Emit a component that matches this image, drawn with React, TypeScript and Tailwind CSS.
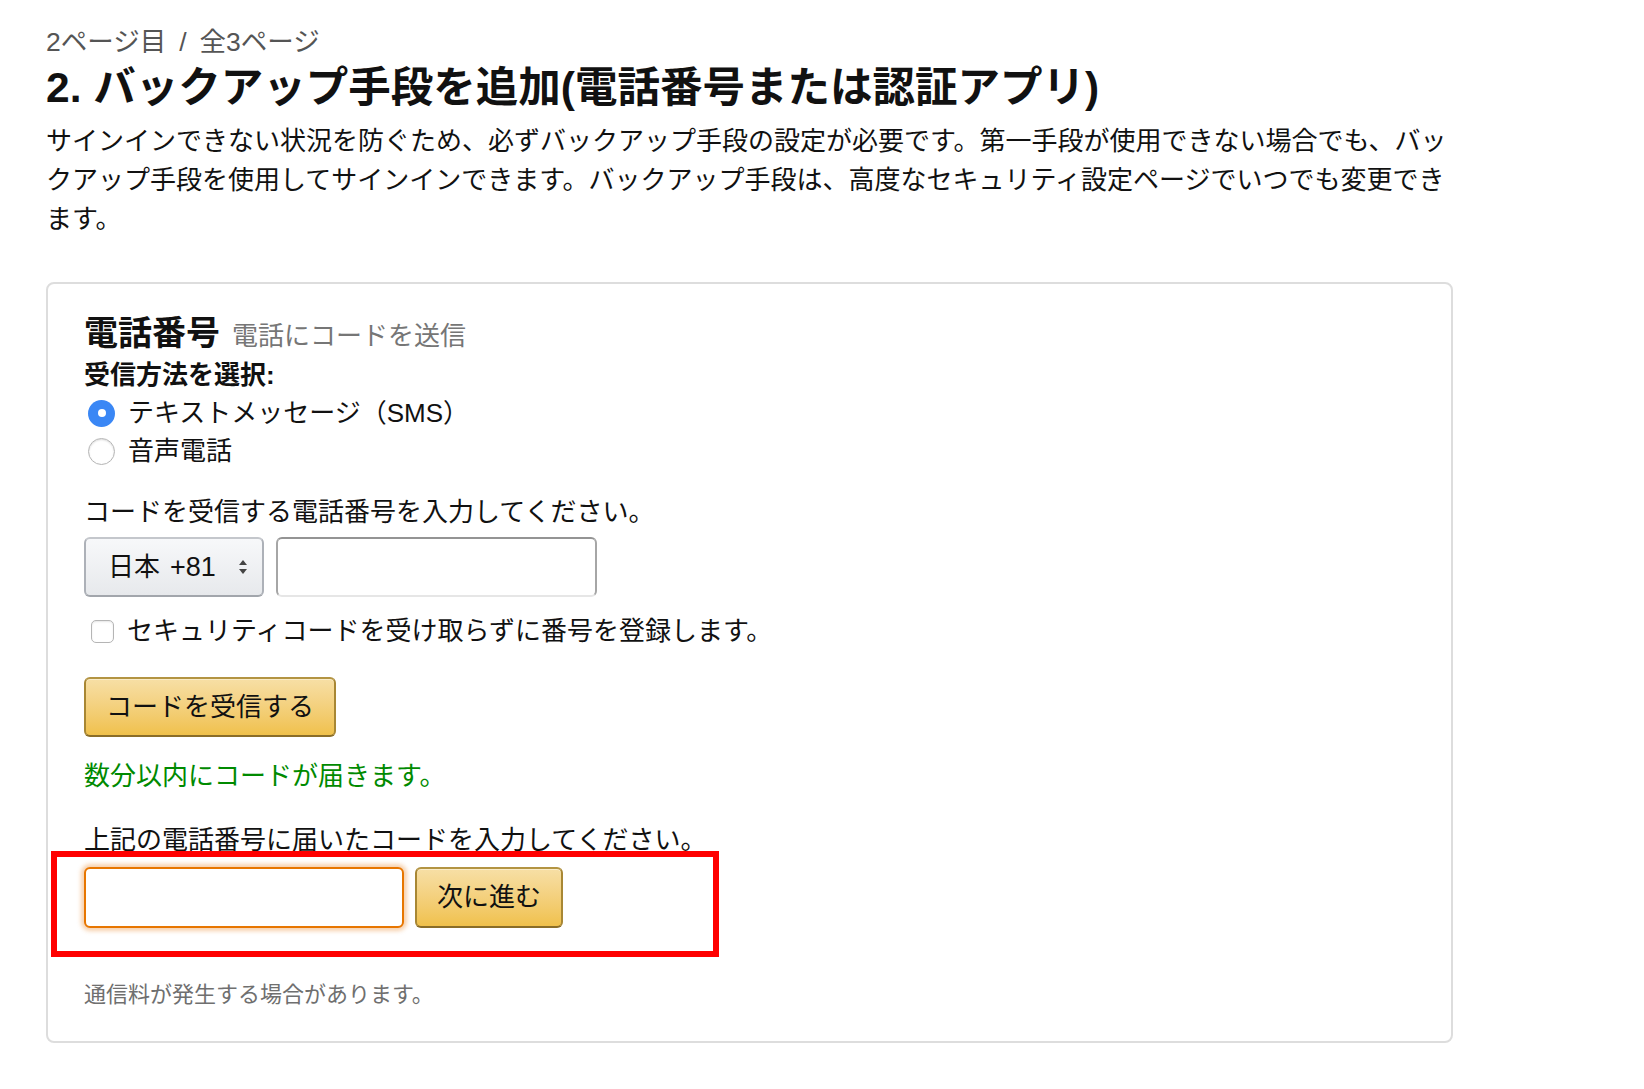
import React, { useState } from 'react';

const font = "font-['Liberation_Sans','Noto_Sans_CJK_JP',sans-serif]";

const YellowButton = ({ label, className }: { label: string; className: string }) => (
  <button
    className={`h-[60px] rounded-[6px] border-2 border-[#a88734] border-t-[#b39442] border-b-[#8a6d28] bg-gradient-to-b from-[#f7dfa5] to-[#f0c14b] text-[26px] text-[#111] shadow-[inset_0_1px_0_rgba(255,255,255,0.4)] ${className}`}
  >
    {label}
  </button>
);

export default function App() {
  const [method, setMethod] = useState<'sms' | 'voice'>('sms');
  const [skipCode, setSkipCode] = useState(false);

  return (
    <div className={`min-h-screen bg-white text-[#111] ${font} pl-[46px] pt-[23px]`}>
      <div className="text-[26.5px] leading-[38px] text-[#555]">
        2ページ目<span className="mx-[13px]">/</span>全3ページ
      </div>
      <h1 className="mt-[2px] text-[42.5px] leading-[50px] font-bold">
        2. バックアップ手段を追加(電話番号または認証アプリ)
      </h1>
      <p className="mt-[9px] w-[1410px] text-[26px] leading-[39px]">
        サインインできない状況を防ぐため、必ずバックアップ手段の設定が必要です。第一手段が使用できない場合でも、バックアップ手段を使用してサインインできます。バックアップ手段は、高度なセキュリティ設定ページでいつでも変更できます。
      </p>

      <div className="mt-[43px] w-[1407px] rounded-[8px] border-2 border-[#dddddd] pl-[36px] pr-[36px] pt-[27px] pb-[30px]">
        <div className="flex items-baseline gap-[12px]">
          <h2 className="text-[34px] leading-[44px] font-bold">電話番号</h2>
          <span className="text-[26px] text-[#767676]">電話にコードを送信</span>
        </div>
        <div className="text-[26px] leading-[38px] font-bold">受信方法を選択:</div>

        <label className="flex items-center gap-[13px] text-[26px] leading-[38px] cursor-pointer" onClick={() => setMethod('sms')}>
          <span
            className={`ml-[4px] flex h-[27px] w-[27px] items-center justify-center rounded-full ${
              method === 'sms' ? 'bg-[#3a87f5]' : 'border border-[#b5b5b5] bg-white shadow-[inset_0_1px_2px_rgba(0,0,0,0.15)]'
            }`}
          >
            {method === 'sms' && <span className="h-[8px] w-[8px] rounded-full bg-white" />}
          </span>
          <span>テキストメッセージ（SMS）</span>
        </label>
        <label className="flex items-center gap-[13px] text-[26px] leading-[38px] cursor-pointer" onClick={() => setMethod('voice')}>
          <span
            className={`ml-[4px] flex h-[27px] w-[27px] items-center justify-center rounded-full ${
              method === 'voice' ? 'bg-[#3a87f5]' : 'border border-[#b5b5b5] bg-white shadow-[inset_0_1px_2px_rgba(0,0,0,0.15)]'
            }`}
          >
            {method === 'voice' && <span className="h-[8px] w-[8px] rounded-full bg-white" />}
          </span>
          <span>音声電話</span>
        </label>

        <div className="mt-[23px] text-[26px] leading-[38px]">コードを受信する電話番号を入力してください。</div>
        <div className="mt-[6px] flex gap-[12px]">
          <div className="flex h-[60px] w-[180px] items-center justify-between rounded-[6px] border-2 border-[#adb1b8] border-t-[#c4c7cc] border-b-[#a2a6ac] bg-gradient-to-b from-[#f7f8fa] to-[#e7e9ec] pl-[22px] pr-[14px] text-[26px]">
            <span>
              日本<span className="ml-[10px] text-[27px]">+81</span>
            </span>
            <svg width="10" height="18" viewBox="0 0 10 18" className="text-[#444]">
              <path d="M5 2 L9 7 H1 Z" fill="currentColor" />
              <path d="M5 16 L9 11 H1 Z" fill="currentColor" />
            </svg>
          </div>
          <input className="h-[60px] w-[321px] rounded-[6px] border-2 border-[#a6a6a6] border-t-[#949494] border-b-[#e6e6e6] bg-white px-[10px] text-[26px] outline-none" />
        </div>

        <label className="mt-[15px] flex items-center gap-[13px] text-[26px] leading-[38px] cursor-pointer">
          <input
            type="checkbox"
            checked={skipCode}
            onChange={() => setSkipCode(!skipCode)}
            className="ml-[7px] h-[23px] w-[23px] appearance-none rounded-[5px] border border-[#b5b5b5] bg-white shadow-[inset_0_1px_2px_rgba(0,0,0,0.1)] checked:bg-[#3a87f5]"
          />
          <span>セキュリティコードを受け取らずに番号を登録します。</span>
        </label>

        <YellowButton label="コードを受信する" className="mt-[27px] w-[252px]" />

        <div className="mt-[20px] text-[26px] leading-[38px] text-[#008a00]">数分以内にコードが届きます。</div>

        <div className="mt-[26px] text-[26px] leading-[38px]">上記の電話番号に届いたコードを入力してください。</div>
        <div className="relative mt-[8px] flex gap-[11px]">
          <input className="h-[61px] w-[320px] rounded-[6px] border-2 border-[#e77600] bg-white px-[10px] text-[26px] shadow-[0_0_4px_3px_rgba(228,121,17,0.35)] outline-none" />
          <YellowButton label="次に進む" className="h-[61px] w-[148px]" />
          {/* annotation frame */}
          <div className="pointer-events-none absolute left-[-33px] top-[-16px] h-[106px] w-[668px] border-[6px] border-[#ff0000]" />
        </div>

        <div className="mt-[51px] text-[22px] leading-[32px] text-[#6f6f6f]">通信料が発生する場合があります。</div>
      </div>
    </div>
  );
}
